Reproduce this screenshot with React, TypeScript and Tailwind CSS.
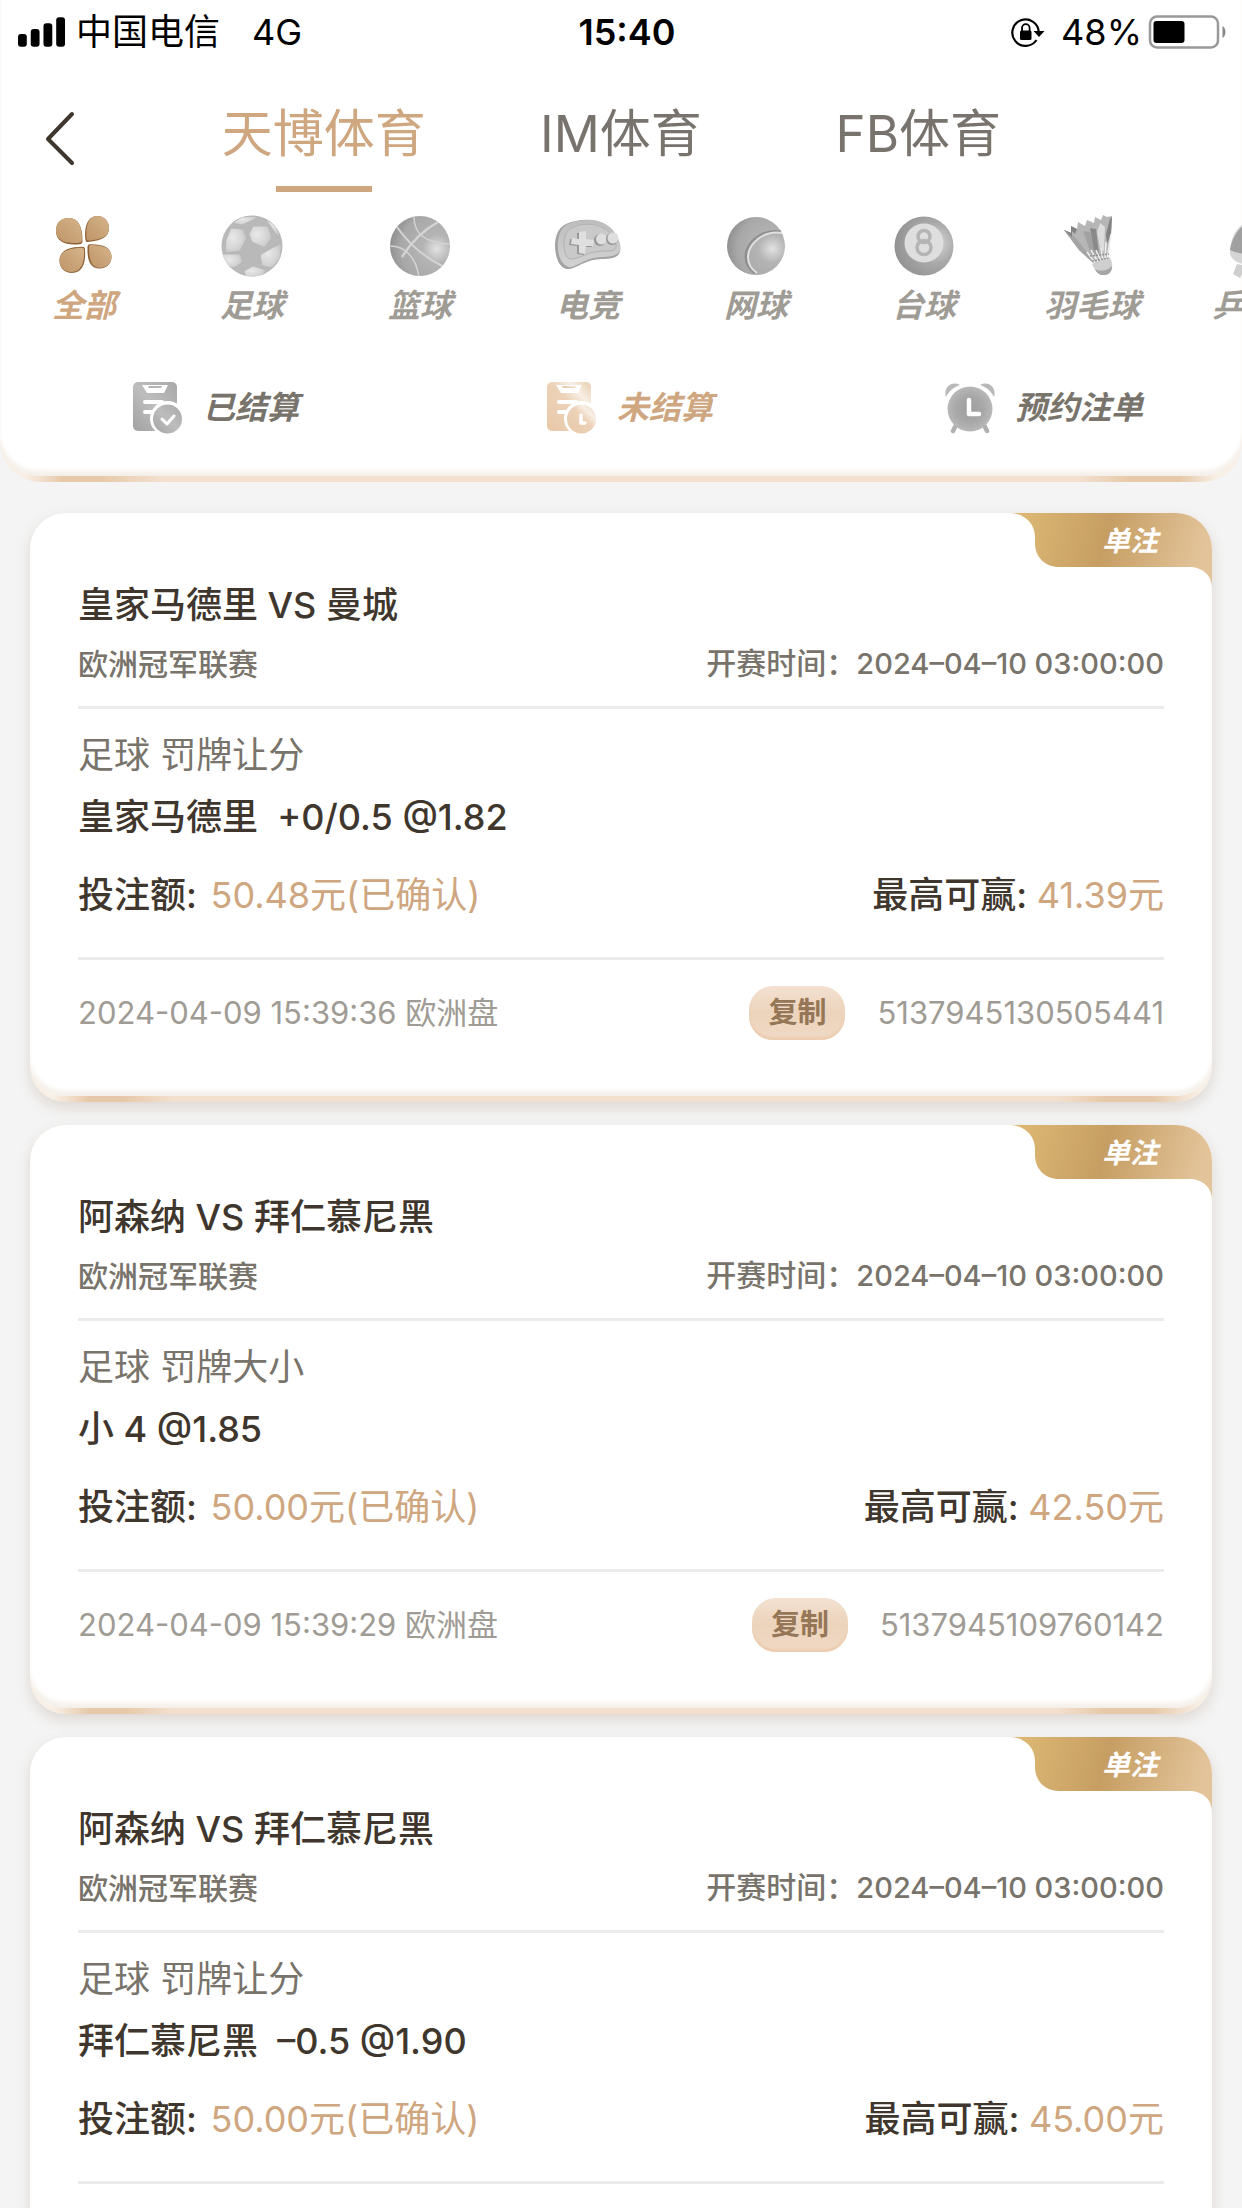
import React, { useState } from "react";

const FONT = "font-[Inter,'Noto_Sans_CJK_SC',sans-serif]";

function Gradients() {
  return (
    <svg width="0" height="0" className="absolute" aria-hidden="true">
      <defs>
        <radialGradient id="ballLight" cx="0.35" cy="0.4" r="0.7">
          <stop offset="0" stopColor="#e9e9e9" />
          <stop offset="0.6" stopColor="#d6d6d6" />
          <stop offset="1" stopColor="#c0c0c0" />
        </radialGradient>
        <radialGradient id="ballDark" cx="0.78" cy="0.55" r="0.8">
          <stop offset="0" stopColor="#e2e2e2" />
          <stop offset="0.3" stopColor="#b4b4b4" />
          <stop offset="0.75" stopColor="#a8a8a8" />
          <stop offset="1" stopColor="#8e8e8e" />
        </radialGradient>
        <radialGradient id="eightBall" cx="0.7" cy="0.45" r="0.7">
          <stop offset="0" stopColor="#d8d8d8" />
          <stop offset="0.5" stopColor="#a8a8a8" />
          <stop offset="1" stopColor="#929292" />
        </radialGradient>
        <linearGradient id="petal" x1="0" y1="1" x2="1" y2="0">
          <stop offset="0" stopColor="#be9567" />
          <stop offset="1" stopColor="#d6b48c" />
        </linearGradient>
        <linearGradient id="pad" x1="0" y1="0" x2="0" y2="1">
          <stop offset="0" stopColor="#bdbdbd" />
          <stop offset="1" stopColor="#d2d2d2" />
        </linearGradient>
        <linearGradient id="greySheet" x1="0" y1="1" x2="1" y2="0">
          <stop offset="0" stopColor="#a2a2a2" />
          <stop offset="0.5" stopColor="#bdbdbd" />
          <stop offset="1" stopColor="#a8a8a8" />
        </linearGradient>
        <linearGradient id="tanSheet" x1="0" y1="1" x2="1" y2="0">
          <stop offset="0" stopColor="#e8c9a8" />
          <stop offset="0.55" stopColor="#ecd2b8" />
          <stop offset="0.75" stopColor="#f8efe6" />
          <stop offset="1" stopColor="#e9ccae" />
        </linearGradient>
        <radialGradient id="clockFace">
          <stop offset="0" stopColor="#9e9e9e" />
          <stop offset="0.6" stopColor="#a8a8a8" />
          <stop offset="1" stopColor="#b8b8b8" />
        </radialGradient>
        <linearGradient id="ribbon" x1="0" y1="0" x2="1" y2="0.1">
          <stop offset="0.05" stopColor="#dcb873" />
          <stop offset="0.5" stopColor="#c69e63" />
          <stop offset="1" stopColor="#e3c49a" />
        </linearGradient>
      </defs>
    </svg>
  );
}

const AllIcon = () => (
  <svg viewBox="0 0 64 64" className="size-16" aria-hidden="true">
    <g fill="#8e6237">
      <path d="M30.500 27C30.500 29 29.500 30 27.500 30.200C14 31.500 4 28 4 17C4 9 9 4 16.500 4C26 4 30.500 12 30.500 27Z" />
      <path d="M33.500 26C32 14 35 2 45.500 2C52 2 57 7 57 14C57 23 50 26.500 36 28C34.500 28.200 33.700 27.500 33.500 26Z" />
      <path d="M33 35.500C34 48 31 59 20 59C12.500 59 7.500 54 7.500 46.500C7.500 37 16 33 30.500 32.800C32.300 32.800 33 33.700 33 35.500Z" />
      <path d="M35.500 33C35.500 31.300 36.300 30.300 38 30.200C52 30 59.500 34 59.500 43C59.500 50 54 54.500 47.500 54.500C38 54.500 35 46 35.500 33Z" />
    </g>
    <g fill="url(#petal)">
      <path d="M30 25.500C30 27.500 29 28.500 27 28.700C14 30 4 27 4 16.500C4 9 9 4 16.500 4C26 4 30 12 30 25.500Z" />
      <path d="M34.700 24.500C33.500 13 36 2 45.500 2C52 2 57 7 57 13.500C57 22.500 50 25.500 37 26.500C35.500 26.600 34.800 26 34.700 24.500Z" />
      <path d="M32 36C32.500 47 30 58 20 58C12.500 58 7.500 53.500 7.500 46.500C7.500 38 16 34 29.500 33.700C31.300 33.700 32 34.500 32 36Z" />
      <path d="M37 33.500C37 31.800 37.500 31 39 31C52 31 59.500 34.500 59.500 42.500C59.500 49.500 54 53.700 48 53.700C39 53.700 37 45 37 33.500Z" />
    </g>
  </svg>
);

const FootballIcon = () => (
  <svg viewBox="0 0 64 64" className="size-16" aria-hidden="true">
    <clipPath id="fb"><circle cx="32" cy="32" r="30.500" /></clipPath>
    <circle cx="32" cy="32" r="30.500" fill="#b9b9b9" />
    <g clipPath="url(#fb)" fill="url(#ballLight)" stroke="#b4b4b4" strokeWidth="0.700">
      <path d="M6 26L11 14L23 15L27 24L20 37L5 39Z" />
      <path d="M29 20L33 12L48 12L52 24L45 34L32 28Z" />
      <path d="M2 40L20 40L23 48L14 54L4 52Z" />
      <path d="M40 41L52 34L62 29L60 44L52 54L42 52Z" />
      <path d="M24 57L33 52L46 56L42 64H26Z" />
      <path d="M13 9L22 3L38 2L35 5L22 11Z" />
      <path d="M45 4L58 14L60 25L54 17Z" />
    </g>
  </svg>
);

const BasketballIcon = () => (
  <svg viewBox="0 0 64 64" className="size-16" aria-hidden="true">
    <clipPath id="bb"><circle cx="32" cy="32" r="30" /></clipPath>
    <circle cx="32" cy="32" r="30" fill="url(#ballDark)" />
    <g clipPath="url(#bb)" fill="none" stroke="#d4d4d4" strokeWidth="1.500">
      <path d="M50 8C34 17 22 30 14 43" strokeWidth="2.500" />
      <path d="M9 13C20 29 36 43 56 53" strokeWidth="2" />
      <path d="M26 3C26 22 40 29 62 30" />
      <path d="M2 32C17 32 28 43 31 63" />
    </g>
  </svg>
);

const GamepadIcon = () => (
  <svg viewBox="0 0 72 64" className="h-16 w-18" aria-hidden="true">
    <path d="M3 30C4 16 10 9 24 7C43 3 63 9 68 31C70 43 62 45 50 45C33 45 23 56 15 55C7 54 3 43 3 30Z" fill="#a3a3a3" />
    <path d="M6 28C7 15 13 9 26 7C45 3 62 10 68 30C70 40 62 43 50 43C33 43 24 54 17 53C9 51 5 40 6 28Z" fill="url(#pad)" />
    <path d="M12 29C12 18 18 13 28 11C44 8 60 14 64 31C65 37 59 37 50 37C34 38 25 46 18 45C13 43 12 36 12 29Z" fill="#c9c9c9" stroke="#b2b2b2" strokeWidth="1" />
    <path d="M25 19L32 18L33 26L41 27L40 33L33 33L32 41L25 40L25 32L17 31L18 25L25 26Z" fill="#989898" />
    <path d="M27 18L34 17L34 25L42 26L41 32L34 32L33 40L27 39L27 31L19 30L20 24L27 25Z" fill="#dfdfdf" />
    <circle cx="48" cy="26" r="6" fill="#959595" /><circle cx="49.500" cy="25" r="5.500" fill="#dedede" />
    <circle cx="60" cy="25" r="6" fill="#959595" /><circle cx="61" cy="24" r="5.500" fill="#dedede" />
  </svg>
);

const TennisIcon = () => (
  <svg viewBox="0 0 64 64" className="size-16" aria-hidden="true">
    <circle cx="32" cy="32" r="29" fill="url(#ballDark)" />
    <path d="M57 18C37 15 22 29 22 43C22 50 26 55 31 59" fill="none" stroke="#8f8f8f" strokeWidth="3" />
    <path d="M58 19C39 16 24 30 24 43C24 50 27 55 33 59" fill="none" stroke="#e0e0e0" strokeWidth="2" />
  </svg>
);

const EightBallIcon = () => (
  <svg viewBox="0 0 64 64" className="size-16" aria-hidden="true">
    <circle cx="32" cy="32" r="29.500" fill="url(#eightBall)" />
    <circle cx="32" cy="29" r="19.500" fill="#dedede" />
    <circle cx="32" cy="22.500" r="6" fill="none" stroke="#b4b4b4" strokeWidth="3.500" />
    <circle cx="32" cy="33.500" r="7" fill="none" stroke="#b4b4b4" strokeWidth="3.500" />
  </svg>
);

const ShuttleIcon = () => (
  <svg viewBox="0 0 64 64" className="size-16" aria-hidden="true">
    <path d="M4 16L11 19L11 12L17 15L18 8L25 12L27 6L34 9L35 3L41 6L43 1L47 3L52 2L51 20L48 46L34 50L19 36Z" fill="#b6b6b6" />
    <path d="M4 16L11 19C20 28 28 40 34 48L30 46L19 36Z" fill="#a4a4a4" />
    <path d="M4 16L11 19L11 12L17 15L15 20L12 17L12 23Z" fill="#828282" />
    <path d="M23 17L30 18L37 41L31 40Z" fill="#a2a2a2" />
    <path d="M30 14L36 15L39 40L34 36Z" fill="#8a8a8a" />
    <path d="M40 9L45 13L44 38L40 34L37 18Z" fill="#dcdcdc" />
    <path d="M50 5L52 3L51 20L47 30L46 20Z" fill="#828282" />
    <path d="M27 38L35 49M31 36L38 48M36 36L41 47M41 34L43 47M46 28L45 46M51 20L47 46" stroke="#efefef" strokeWidth="1.500" fill="none" />
    <path d="M30 42L49 40M32 47L50 44" stroke="#929292" strokeWidth="1.500" strokeDasharray="2 1" />
    <path d="M32 50L50 44C54 50 53 61 44 61C37 61 35 56 32 50Z" fill="#cfcfcf" />
    <path d="M35 55C40 58 47 57 52 52C52 58 49 61 44 61C39 61 37 59 35 55Z" fill="#a6a6a6" />
  </svg>
);

const PaddleIcon = () => (
  <svg viewBox="0 0 64 64" className="size-16" aria-hidden="true">
    <path d="M2 40C2 24 8 14 18 8C36 0 60 8 56 28C52 46 30 52 18 50C10 50 4 46 2 40Z" fill="#d5d5d5" />
    <path d="M2 36C4 24 10 14 20 8C38 2 58 10 54 26C48 42 20 44 2 36Z" fill="#a0a0a0" />
    <path d="M9 50L18 52L12 64L5 60Z" fill="#cfcfcf" />
  </svg>
);

const Sheet = ({ fill, children }: { fill: string; children: React.ReactNode }) => (
  <svg viewBox="0 0 50 52" className="h-13 w-12.5 shrink-0" aria-hidden="true">
    <rect x="0" y="0" width="44" height="49" rx="5" fill={fill} />
    <path d="M9 3H35L31 11H14Z" fill="#fff" />
    <path d="M15 4H29L28 6H16Z" fill={fill} />
    <path d="M12 20H29M12 30H19" stroke="#fff" strokeWidth="4" strokeLinecap="round" />
    <circle cx="34.500" cy="36.500" r="17.500" fill="#fff" />
    <circle cx="34.500" cy="37" r="14.500" fill={fill} />
    {children}
  </svg>
);

const SettledIcon = () => (
  <Sheet fill="url(#greySheet)">
    <path d="M29 37L34 42L41 34" fill="none" stroke="#fff" strokeWidth="3" strokeLinecap="round" strokeLinejoin="round" />
  </Sheet>
);

const PendingIcon = () => (
  <Sheet fill="url(#tanSheet)">
    <path d="M34 33V41H38" fill="none" stroke="#fff" strokeWidth="3.500" strokeLinecap="round" strokeLinejoin="round" />
  </Sheet>
);

const AlarmIcon = () => (
  <svg viewBox="0 0 50 52" className="h-13 w-12.5 shrink-0" aria-hidden="true">
    <path d="M1 15C-2 6 6 -2 15 3C9 5 4 9 1 15Z" fill="#b9b9b9" />
    <path d="M49 15C52 6 44 -2 35 3C41 5 46 9 49 15Z" fill="#b9b9b9" />
    <path d="M11 43L8 49M39 43L42 49" stroke="#b0b0b0" strokeWidth="4.500" strokeLinecap="round" />
    <circle cx="25" cy="27" r="22.500" fill="url(#clockFace)" />
    <path d="M24 18V32H34" fill="none" stroke="#fff" strokeWidth="4.500" strokeLinecap="round" strokeLinejoin="round" />
  </svg>
);

function StatusBar() {
  return (
    <div className="grid h-16 grid-cols-3 items-center pr-3.5 pl-4.5 text-4xl text-black">
      <div className="flex items-center gap-2.5">
        <svg viewBox="0 0 49 30" className="h-7.5 w-12" aria-hidden="true">
          <rect x="0" y="17" width="9" height="13" rx="3" />
          <rect x="13" y="12" width="9" height="18" rx="3" />
          <rect x="26" y="6" width="9" height="24" rx="3" />
          <rect x="39" y="0" width="9" height="30" rx="3" />
        </svg>
        <span>中国电信</span>
        <span className="ml-5.5">4G</span>
      </div>
      <div className="pl-2 text-center font-semibold">15:40</div>
      <div className="flex items-center justify-end gap-1.5">
        <svg viewBox="0 0 34 30" className="mr-2.5 h-7.5 w-8.5" aria-hidden="true">
          <path d="M25.500 23A13.200 13.200 0 1 1 27.700 15" fill="none" stroke="#000" strokeWidth="2.200" />
          <path d="M22.500 14H33.500L28 20Z" />
          <rect x="9" y="13.500" width="11.500" height="9.500" rx="1.500" />
          <path d="M11 14V11A3.800 3.800 0 0 1 18.600 11V14" fill="none" stroke="#000" strokeWidth="1.800" />
        </svg>
        <span>48%</span>
        <svg viewBox="0 0 79 34" className="h-8.5 w-20" aria-hidden="true">
          <rect x="1.500" y="1.500" width="68" height="31" rx="7" fill="none" stroke="#999" strokeWidth="2.500" />
          <rect x="5" y="6" width="31" height="22" rx="3" />
          <path d="M74 11C78 13 78 21 74 23Z" fill="#888" />
        </svg>
      </div>
    </div>
  );
}

const providers = ["天博体育", "IM体育", "FB体育"];

const sports = [
  { name: "全部", Icon: AllIcon },
  { name: "足球", Icon: FootballIcon },
  { name: "篮球", Icon: BasketballIcon },
  { name: "电竞", Icon: GamepadIcon },
  { name: "网球", Icon: TennisIcon },
  { name: "台球", Icon: EightBallIcon },
  { name: "羽毛球", Icon: ShuttleIcon },
  { name: "乒乓球", Icon: PaddleIcon },
];

const filters = [
  { name: "已结算", Icon: SettledIcon },
  { name: "未结算", Icon: PendingIcon },
  { name: "预约注单", Icon: AlarmIcon },
];

function Header() {
  const [provider, setProvider] = useState(0);
  const [sport, setSport] = useState(0);
  const [filter, setFilter] = useState(1);
  return (
    <header className="rounded-b-[40px] bg-[linear-gradient(90deg,#f8efe6_2%,#e7c9a9_5%,#e7c9a9_8%,#f3dfcd_13%,#f3dfcd_87%,#e7c9a9_91%,#e7c9a9_95%,#f8efe6_98%)] pb-1.5">
      <div className="rounded-b-[40px] bg-white pb-10 shadow-[inset_0_-6px_4px_-1px_#f5f0ea]">
        <StatusBar />
        <nav className="flex h-32 items-center">
          <button aria-label="返回" className="flex w-[175px] pt-5 pl-11">
            <svg viewBox="0 0 32 56" className="h-14 w-8" fill="none" stroke="#3f362d" strokeWidth="4" strokeLinecap="round" strokeLinejoin="round" aria-hidden="true">
              <path d="M28 4L4 29L28 53" />
            </svg>
          </button>
          <div className="mr-[175px] grid h-full flex-1 grid-cols-3">
            {providers.map((name, i) => (
              <button
                key={name}
                onClick={() => setProvider(i)}
                className={`flex flex-col items-center justify-between pt-7.5 text-[51px] leading-20 ${i === provider ? "text-[#cea680]" : "text-[#78736d]"}`}
              >
                {name}
                <span className={`h-1.5 w-24 ${i === provider ? "bg-[#cea680]" : ""}`} />
              </button>
            ))}
          </div>
        </nav>
        <div className="flex overflow-hidden pt-5.5">
          {sports.map(({ name, Icon }, i) => (
            <button
              key={name}
              onClick={() => setSport(i)}
              className={`flex w-42 shrink-0 flex-col items-center gap-1 text-[32px] leading-12 font-bold italic ${i === sport ? "text-[#cea680]" : "text-[#9f9b95]"}`}
            >
              <Icon />
              {name}
            </button>
          ))}
        </div>
        <div className="grid grid-cols-3 pt-12.5">
          {filters.map(({ name, Icon }, i) => (
            <button
              key={name}
              onClick={() => setFilter(i)}
              className={`flex items-center justify-center gap-5 pl-4.5 text-[32px] leading-14 font-bold italic ${i === filter ? "text-[#cea680]" : "text-[#78736b]"}`}
            >
              <Icon />
              {name}
            </button>
          ))}
        </div>
      </div>
    </header>
  );
}

type Bet = { match: string; market: string; pick: string; stake: string; win: string; time: string; id: string };

const bets: Bet[] = [
  { match: "皇家马德里 VS 曼城", market: "足球 罚牌让分", pick: "皇家马德里  +0/0.5 @1.82", stake: "50.48元(已确认)", win: "41.39元", time: "2024-04-09 15:39:36", id: "5137945130505441" },
  { match: "阿森纳 VS 拜仁慕尼黑", market: "足球 罚牌大小", pick: "小 4 @1.85", stake: "50.00元(已确认)", win: "42.50元", time: "2024-04-09 15:39:29", id: "5137945109760142" },
  { match: "阿森纳 VS 拜仁慕尼黑", market: "足球 罚牌让分", pick: "拜仁慕尼黑  –0.5 @1.90", stake: "50.00元(已确认)", win: "45.00元", time: "2024-04-09 15:39:21", id: "5137945098412357" },
];

function BetCard({ bet }: { bet: Bet }) {
  return (
    <article className="rounded-[36px] bg-[linear-gradient(90deg,#f8efe6_2%,#e7c9a9_5%,#e7c9a9_8%,#f3dfcd_12%,#f3dfcd_87%,#e7c9a9_91%,#e7c9a9_95%,#f8efe6_99%)] pb-1.5 shadow-[0_6px_14px_rgba(120,90,60,0.18)]">
      <div className="relative overflow-hidden rounded-[36px] bg-white px-12 pt-17 pb-14 shadow-[inset_0_-6px_4px_-1px_#f5f0ea]">
        <div className="absolute top-0 right-0">
          <svg viewBox="0 0 201 75" className="h-[75px] w-[201px]" aria-hidden="true">
            <path d="M0 0C14 1 24 11 24 24V30C24 44 34 54 48 54H178C191 54 201 62 201 75V0Z" fill="url(#ribbon)" />
          </svg>
          <span className="absolute top-1 right-13.5 text-[28px] leading-12 font-bold text-white italic">单注</span>
        </div>
        <h2 className="text-4xl leading-12 font-medium text-[#3f362d]">{bet.match}</h2>
        <div className="flex items-center justify-between border-b-3 border-[#ebebeb] pt-2.5 pb-4.5 text-[30px] leading-12 font-medium text-[#78736b]">
          <span>欧洲冠军联赛</span>
          <span>开赛时间：<span className="text-[29px]">2024–04–10 03:00:00</span></span>
        </div>
        <p className="pt-5.5 text-4xl leading-12 text-[#78736b]">{bet.market}</p>
        <p className="pt-3.5 text-4xl leading-12 font-medium whitespace-pre text-[#3f362d]">{bet.pick}</p>
        <div className="flex justify-between border-b-3 border-[#ebebeb] pt-7.5 pb-9.5 text-4xl leading-12 font-medium text-[#3f362d]">
          <span>投注额: <span className="ml-1 font-normal text-[#cea680]">{bet.stake}</span></span>
          <span>最高可赢: <span className="font-normal text-[#cea680]">{bet.win}</span></span>
        </div>
        <div className="flex items-center pt-6.5 text-[31px] leading-13.5 text-[#9f9b95]">
          <span>{bet.time} 欧洲盘</span>
          <button className="mr-8 ml-auto h-13.5 w-24 rounded-[24px] bg-linear-to-b from-[#f3e1d1] via-[#ecd3bb] to-[#f0d9c5] text-[29px] leading-13.5 font-bold text-[#957657] shadow-[inset_0_-3px_2px_#eccdb0]">复制</button>
          <span>{bet.id}</span>
        </div>
      </div>
    </article>
  );
}

export default function App() {
  return (
    <div className={`h-screen overflow-hidden bg-[#f4f4f4] ${FONT}`}>
      <Gradients />
      <Header />
      <main className="flex flex-col gap-[23px] px-7.5 pt-[31px]">
        {bets.map((bet) => (
          <BetCard key={bet.id} bet={bet} />
        ))}
      </main>
    </div>
  );
}
